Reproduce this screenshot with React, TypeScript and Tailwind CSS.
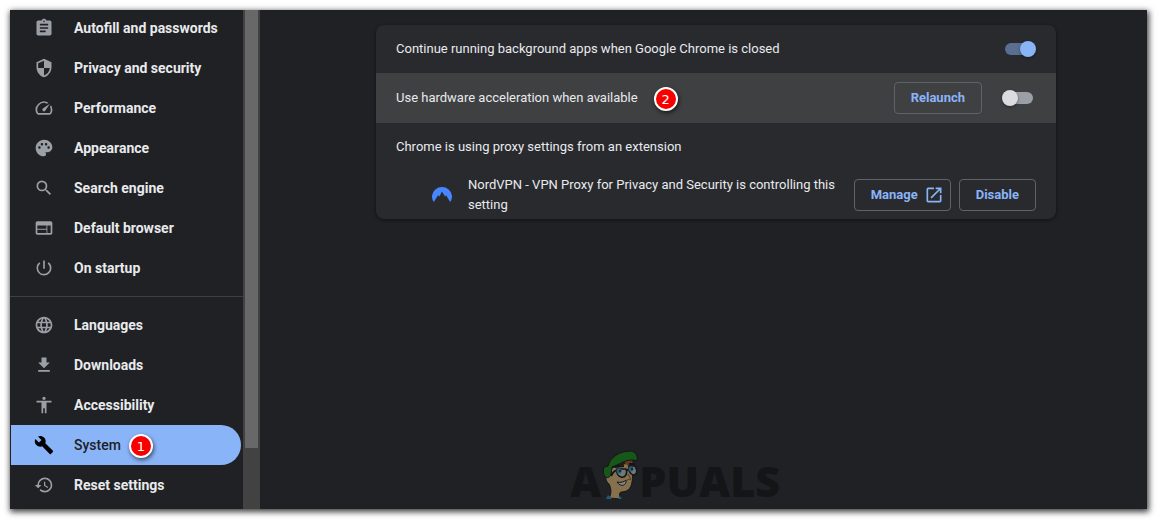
import type { IconType } from 'react-icons';
import {
  MdAccessibility,
  MdAssignment,
  MdBuild,
  MdFileDownload,
  MdHistory,
  MdLanguage,
  MdOpenInNew,
  MdOutlineSpeed,
  MdPalette,
  MdPowerSettingsNew,
  MdSearch,
  MdSecurity,
  MdWeb,
} from 'react-icons/md';

type NavItem = { icon: IconType; label: string; step?: string };

const basicItems: NavItem[] = [
  { icon: MdAssignment, label: 'Autofill and passwords' },
  { icon: MdSecurity, label: 'Privacy and security' },
  { icon: MdOutlineSpeed, label: 'Performance' },
  { icon: MdPalette, label: 'Appearance' },
  { icon: MdSearch, label: 'Search engine' },
  { icon: MdWeb, label: 'Default browser' },
  { icon: MdPowerSettingsNew, label: 'On startup' },
];

const advancedItems: NavItem[] = [
  { icon: MdLanguage, label: 'Languages' },
  { icon: MdFileDownload, label: 'Downloads' },
  { icon: MdAccessibility, label: 'Accessibility' },
  { icon: MdBuild, label: 'System', step: '1' },
  { icon: MdHistory, label: 'Reset settings' },
];

const StepBadge = ({ step }: { step: string }) => (
  <span className="absolute left-full top-1/2 flex h-6 w-6 -translate-y-[11px] items-center justify-center rounded-full border-2 border-white bg-[#f90000] font-['DejaVu_Sans',sans-serif] text-[13px] leading-none font-normal text-white shadow-[1px_2px_4px_rgba(0,0,0,0.6)]">
    {step}
  </span>
);

const NavLink = ({ item }: { item: NavItem }) => {
  const Icon = item.icon;
  const active = item.label === 'System';
  return (
    <a
      href="#"
      aria-current={active ? 'page' : undefined}
      className={`ml-px mr-0.5 flex h-10 items-center gap-5 rounded-r-full pl-[23px] text-sm ${
        active ? 'bg-[#8ab4f8] font-medium text-[#202124]' : 'font-bold text-[#e8eaed]'
      }`}
    >
      <Icon className={`h-5 w-5 ${active ? 'text-black' : 'text-[#9aa0a6]'}`} />
      <span className="relative pr-2">
        {item.label}
        {item.step && <StepBadge step={item.step} />}
      </span>
    </a>
  );
};

const Toggle = ({ id, defaultChecked }: { id: string; defaultChecked?: boolean }) => (
  <span className="relative flex h-4 w-[34px] items-center">
    <input
      id={id}
      type="checkbox"
      role="switch"
      defaultChecked={defaultChecked}
      className="peer absolute inset-0 z-10 cursor-pointer opacity-0"
    />
    <span className="mx-[3px] h-3 w-7 rounded-full bg-[#9aa0a6] peer-checked:bg-[#5a6e91]" />
    <span className="absolute left-0 h-4 w-4 rounded-full bg-[#dadce0] shadow-[0_1px_3px_rgba(0,0,0,0.4)] peer-checked:left-[18px] peer-checked:bg-[#8ab4f8]" />
  </span>
);

const buttonClass =
  'flex h-8 shrink-0 items-center gap-1.5 rounded border border-[#5f6368] text-[13px] font-bold text-[#8ab4f8]';

const NordIcon = () => (
  <svg viewBox="0 0 20 20" className="h-5 w-5 shrink-0" aria-hidden="true">
    <path
      fill="#4687ff"
      d="M1.8 17A10 9.5 0 1 1 18.2 17L14.1 10.2L12.9 11.7L12.6 10.8L9.9 6.6L8 10.4L7.5 11.6L6.1 10.3Z"
    />
  </svg>
);

const Mascot = () => (
  <svg viewBox="0 0 38 50" className="mb-px h-[50px] w-[38px]" aria-hidden="true">
    <path
      d="M8 48C11 43 10 38 8 34C5 32 4 28 5 20L26 13L31 17C32 23 32 27 31 32C30 39 26 42 20 42C18 43 18 46 20 49Z"
      fill="#86714f"
      stroke="#151515"
    />
    <path d="M24 10L31 10L32 16L28 20C28 16 27 15 24 14Z" fill="#69351d" />
    <path
      d="M4 27C2 24 2 20 3 17L7 16C9 7 19 1 30 1C35 2 37 6 36 11C29 8 22 12 16 15L11 17L10 25C8 28 6 28 4 27Z"
      fill="#17571a"
      stroke="#151515"
    />
    <path d="M10 26C12 22 14 20 17 20M25 21L28 19" fill="none" stroke="#151515" strokeWidth="2" />
    <path d="M14 17L23 16M28 14L34 14" stroke="#151515" strokeWidth="2" />
    <path d="M16 19H25C27 24 24 28 20 27C17 26 15 23 16 19Z" fill="#73777b" stroke="#151515" strokeWidth="1.5" />
    <path d="M28 16H34C37 21 36 25 32 25C29 24 27 20 28 16Z" fill="#73777b" stroke="#151515" strokeWidth="1.5" />
    <circle cx="18" cy="21" r="2.5" fill="#1c607e" />
    <circle cx="30" cy="19" r="2.5" fill="#1c607e" />
    <circle cx="19" cy="21" r="1" fill="#151515" />
    <circle cx="31" cy="19" r="1" fill="#151515" />
    <path d="M27 24L30 29L26 30" fill="none" stroke="#4b3824" />
    <path d="M16 32C20 33 23 32 25 30C26 35 20 38 16 32Z" fill="#898989" stroke="#151515" />
    <path d="M5 49L7 45L11 49ZM17 49L19 46L21 49Z" fill="#17617d" />
  </svg>
);

const App = () => {
  return (
    <div className="min-h-screen bg-white p-2.5 pb-[11px] pr-[11px] font-[Roboto,sans-serif]">
      <div className="flex overflow-hidden bg-[#202124] shadow-[1px_2px_6px_1px_rgba(0,0,0,0.75)]">
        <nav className="-mt-0.5 w-[233px] shrink-0 pb-1">
          {basicItems.map((item) => (
            <NavLink key={item.label} item={item} />
          ))}
          <hr className="my-2 border-[#3c4043]" />
          {advancedItems.map((item) => (
            <NavLink key={item.label} item={item} />
          ))}
        </nav>

        {/* scrollbar */}
        <div className="flex w-[17px] shrink-0 flex-col bg-[#424242] px-0.5 pb-[61px]">
          <div className="flex-1 bg-[#686868]" />
        </div>

        <main className="flex flex-1 flex-col items-center justify-between pt-[15px] pb-2 text-[13px] leading-5 text-[#e8eaed]">
          <section className="ml-[25px] w-full max-w-[680px] overflow-hidden rounded-lg bg-[#292a2d] shadow-[0_1px_3px_1px_rgba(0,0,0,0.3)]">
            <div className="flex h-12 items-center justify-between px-5">
              <label htmlFor="background-apps">Continue running background apps when Google Chrome is closed</label>
              <Toggle id="background-apps" defaultChecked />
            </div>
            <div className="flex h-[50px] items-center gap-5 bg-[#3f4042] px-5">
              <div className="flex-1">
                <span className="relative inline-block pr-4">
                  <label htmlFor="hardware">Use hardware acceleration when available</label>
                  <StepBadge step="2" />
                </span>
              </div>
              <button type="button" className={`${buttonClass} px-4`}>Relaunch</button>
              <Toggle id="hardware" />
            </div>
            <div className="flex h-12 items-center px-5">Chrome is using proxy settings from an extension</div>
            <div className="flex items-center py-1 pl-14 pr-5">
              <NordIcon />
              <p className="ml-4 mr-4 flex-1">NordVPN - VPN Proxy for Privacy and Security is controlling this setting</p>
              <button type="button" className={`${buttonClass} mr-2 pl-4 pr-1.5`}>
                Manage
                <MdOpenInNew className="h-5 w-5" />
              </button>
              <button type="button" className={`${buttonClass} px-4`}>Disable</button>
            </div>
          </section>

          <div className="mr-[57px] flex items-end font-['Open_Sans',sans-serif] text-[43px] leading-10 font-extrabold text-[#141517]">
            <span>A</span>
            <Mascot />
            <span>PUALS</span>
          </div>
        </main>
      </div>
    </div>
  );
};

export default App;
